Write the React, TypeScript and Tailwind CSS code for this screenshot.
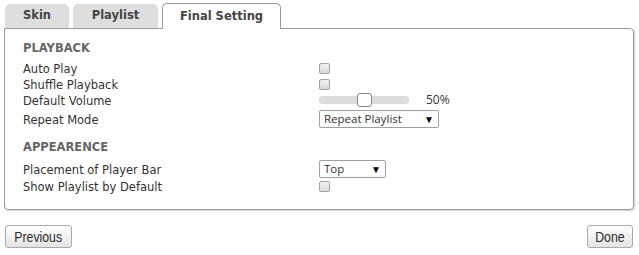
import React from 'react';

const body = "font-['DejaVu_Sans',Verdana,sans-serif]";
const ui = "font-['Open_Sans',sans-serif]";

const Checkbox: React.FC = () => (
  <div className="w-[11px] h-[11px] rounded-[2px] border border-[#a3a3a3] bg-gradient-to-b from-[#f2f2f2] to-[#d9d9d9]" />
);

const Select: React.FC<{ value: string; width: string }> = ({ value, width }) => (
  <div
    className={`${width} h-[18px] flex items-center justify-between pl-[4px] pr-[4px] border border-[#a0a0a0] rounded-[2px] bg-white text-[11.5px] text-[#333] ${ui}`}
  >
    <span>{value}</span>
    <span className="text-[10px] leading-none text-black">▼</span>
  </div>
);

const Row: React.FC<{ label: string; h?: string; children: React.ReactNode }> = ({ label, h = 'h-[16px]', children }) => (
  <div className={`flex items-center ${h}`}>
    <div className="w-[296px] pt-[3px] text-[11.5px] text-[#333]">{label}</div>
    <div className="flex items-center">{children}</div>
  </div>
);

const btn =
  "h-[23px] rounded-[3px] border border-[#aaa] bg-gradient-to-b from-white to-[#e4e4e4] text-[15px] text-[#2a2a2a] font-['Liberation_Sans',Arial,sans-serif]";

const App: React.FC = () => {
  return (
    <div className={`w-[639px] h-[255px] bg-white pl-[4px] pr-[5px] pt-[3px] ${body}`}>
      {/* Tabs */}
      <div className="flex items-end h-[25px] pl-[1px] gap-[4px]">
        <div className="w-[64px] h-[24px] rounded-t-[5px] bg-[#dedede] flex items-center justify-center text-[11.5px] font-bold text-[#444]">
          Skin
        </div>
        <div className="w-[85px] h-[24px] rounded-t-[5px] bg-[#dedede] flex items-center justify-center text-[11.5px] font-bold text-[#444]">
          Playlist
        </div>
        <div className="relative z-10 -mb-px w-[119px] h-[26px] rounded-t-[5px] border border-b-0 border-[#999] bg-white flex items-center justify-center text-[11.5px] font-bold text-[#444]">
          Final Setting
        </div>
      </div>

      {/* Panel */}
      <div className="border border-[#999] rounded-b-[4px] rounded-tr-[4px] shadow-[1px_1px_2px_rgba(0,0,0,0.2)] pl-[18px] pt-[12px] pb-[15px]">
        <div className="h-[14px] leading-[14px] text-[11.5px] font-bold text-[#666]">PLAYBACK</div>
        <div className="mt-[5px]">
          <Row label="Auto Play">
            <Checkbox />
          </Row>
          <Row label="Shuffle Playback">
            <Checkbox />
          </Row>
          <Row label="Default Volume">
            <div className="relative w-[90px] h-[8px] rounded-[3px] bg-[#dcdcdc]">
              <div className="absolute left-[38px] -top-[3px] w-[15px] h-[14px] rounded-[3px] border border-[#888] bg-white" />
            </div>
            <span className={`ml-[17px] text-[12px] text-[#333] ${ui}`}>50%</span>
          </Row>
          <div className="mt-[2px]">
            <Row label="Repeat Mode" h="h-[18px]">
              <Select value="Repeat Playlist" width="w-[120px]" />
            </Row>
          </div>
        </div>

        <div className="mt-[12px] h-[14px] leading-[14px] text-[11.5px] font-bold text-[#666]">APPEARENCE</div>
        <div className="mt-[6px]">
          <Row label="Placement of Player Bar" h="h-[18px]">
            <Select value="Top" width="w-[67px]" />
          </Row>
          <Row label="Show Playlist by Default">
            <Checkbox />
          </Row>
        </div>
      </div>

      {/* Footer buttons */}
      <div className="flex justify-between mt-[15px] pl-[1px] pr-[1px]">
        <button className={`${btn} w-[67px]`}>
          <span className="inline-block scale-x-[0.82]">Previous</span>
        </button>
        <button className={`${btn} w-[46px]`}>
          <span className="inline-block scale-x-[0.82]">Done</span>
        </button>
      </div>
    </div>
  );
};

export default App;
